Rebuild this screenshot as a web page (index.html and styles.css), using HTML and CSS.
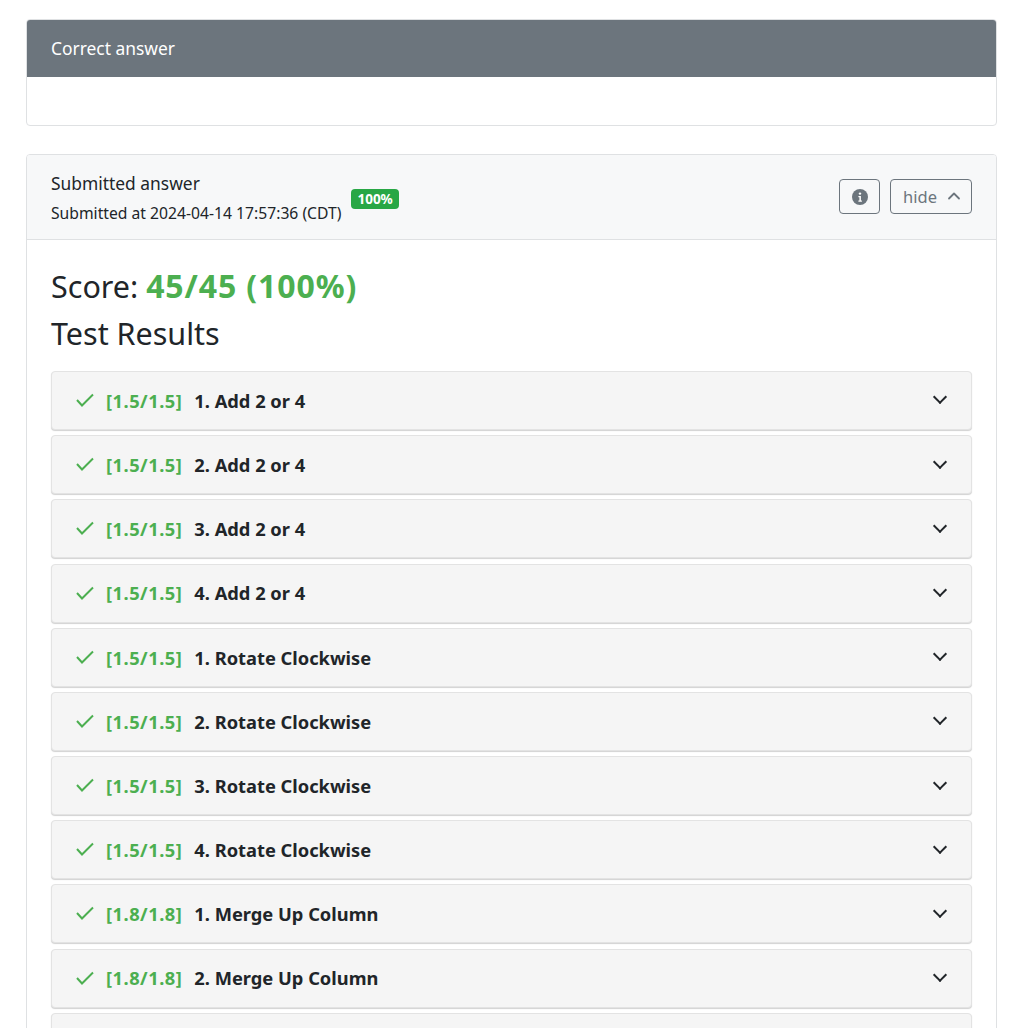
FILE: index.html
```html
<!DOCTYPE html>
<html>
<head>
<meta charset="utf-8">
<link rel="stylesheet" href="styles.css">
</head>
<body>
<div class="page">
  <div class="card">
    <div class="card-header dark">Correct answer</div>
    <div class="card-body empty"></div>
  </div>

  <div class="card">
    <div class="card-header light">
      <div class="sub-info">
        <div class="sub-title">Submitted answer</div>
        <div class="sub-time">Submitted at 2024-04-14 17:57:36 (CDT)</div>
      </div>
      <span class="badge">100%</span>
      <div class="spacer"></div>
      <button class="btn btn-info"><svg width="16" height="16" viewBox="0 0 16 16"><circle cx="8" cy="8" r="8" fill="#6c757d"/><circle cx="8" cy="4.6" r="1.2" fill="#fff"/><path d="M6.4 7h2.5v4.5h1v1.2H6.4v-1.2h1V8.2h-1z" fill="#fff"/></svg></button>
      <button class="btn btn-hide">hide <svg width="14" height="14" viewBox="0 0 14 14"><path d="M2 9.5L7 4.5l5 5" fill="none" stroke="#6c757d" stroke-width="1.8" stroke-linecap="round" stroke-linejoin="round"/></svg></button>
    </div>
    <div class="card-body">
      <h3 class="score">Score: <span class="green">45/45 (100%)</span></h3>
      <h3 class="results">Test Results</h3>
      <div class="tests">
        <div class="test"><svg class="check" width="18" height="14" viewBox="0 0 18 14"><path d="M1 7l5 5.5L17 1.5" fill="none" stroke="#4caf50" stroke-width="2"/></svg><span class="pts">[1.5/1.5]</span><span class="name">1. Add 2 or 4</span><span class="chev"></span></div>
        <div class="test"><svg class="check" width="18" height="14" viewBox="0 0 18 14"><path d="M1 7l5 5.5L17 1.5" fill="none" stroke="#4caf50" stroke-width="2"/></svg><span class="pts">[1.5/1.5]</span><span class="name">2. Add 2 or 4</span><span class="chev"></span></div>
        <div class="test"><svg class="check" width="18" height="14" viewBox="0 0 18 14"><path d="M1 7l5 5.5L17 1.5" fill="none" stroke="#4caf50" stroke-width="2"/></svg><span class="pts">[1.5/1.5]</span><span class="name">3. Add 2 or 4</span><span class="chev"></span></div>
        <div class="test"><svg class="check" width="18" height="14" viewBox="0 0 18 14"><path d="M1 7l5 5.5L17 1.5" fill="none" stroke="#4caf50" stroke-width="2"/></svg><span class="pts">[1.5/1.5]</span><span class="name">4. Add 2 or 4</span><span class="chev"></span></div>
        <div class="test"><svg class="check" width="18" height="14" viewBox="0 0 18 14"><path d="M1 7l5 5.5L17 1.5" fill="none" stroke="#4caf50" stroke-width="2"/></svg><span class="pts">[1.5/1.5]</span><span class="name">1. Rotate Clockwise</span><span class="chev"></span></div>
        <div class="test"><svg class="check" width="18" height="14" viewBox="0 0 18 14"><path d="M1 7l5 5.5L17 1.5" fill="none" stroke="#4caf50" stroke-width="2"/></svg><span class="pts">[1.5/1.5]</span><span class="name">2. Rotate Clockwise</span><span class="chev"></span></div>
        <div class="test"><svg class="check" width="18" height="14" viewBox="0 0 18 14"><path d="M1 7l5 5.5L17 1.5" fill="none" stroke="#4caf50" stroke-width="2"/></svg><span class="pts">[1.5/1.5]</span><span class="name">3. Rotate Clockwise</span><span class="chev"></span></div>
        <div class="test"><svg class="check" width="18" height="14" viewBox="0 0 18 14"><path d="M1 7l5 5.5L17 1.5" fill="none" stroke="#4caf50" stroke-width="2"/></svg><span class="pts">[1.5/1.5]</span><span class="name">4. Rotate Clockwise</span><span class="chev"></span></div>
        <div class="test"><svg class="check" width="18" height="14" viewBox="0 0 18 14"><path d="M1 7l5 5.5L17 1.5" fill="none" stroke="#4caf50" stroke-width="2"/></svg><span class="pts">[1.8/1.8]</span><span class="name">1. Merge Up Column</span><span class="chev"></span></div>
        <div class="test"><svg class="check" width="18" height="14" viewBox="0 0 18 14"><path d="M1 7l5 5.5L17 1.5" fill="none" stroke="#4caf50" stroke-width="2"/></svg><span class="pts">[1.8/1.8]</span><span class="name">2. Merge Up Column</span><span class="chev"></span></div>
        <div class="test"></div>
      </div>
    </div>
  </div>
</div>
</body>
</html>
```

FILE: styles.css
```css
* { box-sizing: border-box; }
html, body { margin: 0; padding: 0; background: #fff; }
body {
  font-family: "Noto Sans", "Open Sans", sans-serif;
  color: #212529;
  font-size: 16px;
  line-height: 1.5;
}
.page {
  padding: 19px 31px 0 26px;
  display: flex;
  flex-direction: column;
  gap: 28px;
}
.card {
  border: 1px solid #dfe1e3;
  border-radius: 4px;
  overflow: hidden;
}
.card-header {
  display: flex;
  align-items: center;
}
.card-header.dark {
  background: #6c757d;
  color: #fff;
  padding: 0 24px 0 24px;
  height: 57px;
  font-size: 17.4px;
}
.card-body.empty { height: 47px; }
.card-header.light {
  background: #f7f8f9;
  border-bottom: 1px solid #dfe1e3;
  padding: 14px 24px 0 24px;
  height: 85px;
  align-items: flex-start;
}
.sub-title { font-size: 17.4px; line-height: 28px; }
.sub-time { font-size: 15.7px; line-height: 22px; margin-top: 5px; }
.badge {
  background: #28a745;
  color: #fff;
  font-weight: 700;
  font-size: 13.5px;
  line-height: 20px;
  height: 20px;
  padding: 0 6px;
  border-radius: 4px;
  margin: 20px 0 0 10px;
}
.spacer { flex: 1; }
.btn {
  background: transparent;
  border: 1px solid #6c757d;
  border-radius: 4px;
  height: 35px;
  margin-top: 10px;
  display: flex;
  align-items: center;
  justify-content: center;
  font-family: inherit;
  color: #6c757d;
  font-size: 16.5px;
  padding: 0;
}
.btn-info { width: 41px; }
.btn-hide { width: 82px; margin-left: 10px; gap: 10px; padding-bottom: 1px; padding-left: 2px; }
.card-body { padding: 24px 24px; }
h3 {
  margin: 0;
  font-weight: 400;
  font-size: 30.5px;
  line-height: 1.2;
}
.score { margin-top: 3px; }
.green { color: #4caf50; font-weight: 700; font-size: 32px; letter-spacing: 0.9px; }
.results { margin-top: 10px; }
.tests {
  margin-top: 19px;
  display: flex;
  flex-direction: column;
  gap: 5.2px;
}
.test {
  background: #f5f5f5;
  border: 1px solid #e3e3e3;
  border-radius: 4px;
  box-shadow: 0 1px 1px rgba(0,0,0,0.18);
  height: 59px;
  flex: none;
  display: flex;
  align-items: center;
  padding: 0 24px 0 24px;
  font-weight: 700;
  font-size: 18.3px;
}
.check {
  flex: none;
  margin-right: 12px;
  margin-bottom: 1px;
}
.pts { color: #4caf50; margin-right: 12px; letter-spacing: 0.5px; }
.name { flex: 1; }
.chev {
  width: 10px;
  height: 10px;
  border-right: 2px solid #212529;
  border-bottom: 2px solid #212529;
  transform: rotate(45deg);
  margin-right: 2px;
  margin-top: -6px;
}
```
